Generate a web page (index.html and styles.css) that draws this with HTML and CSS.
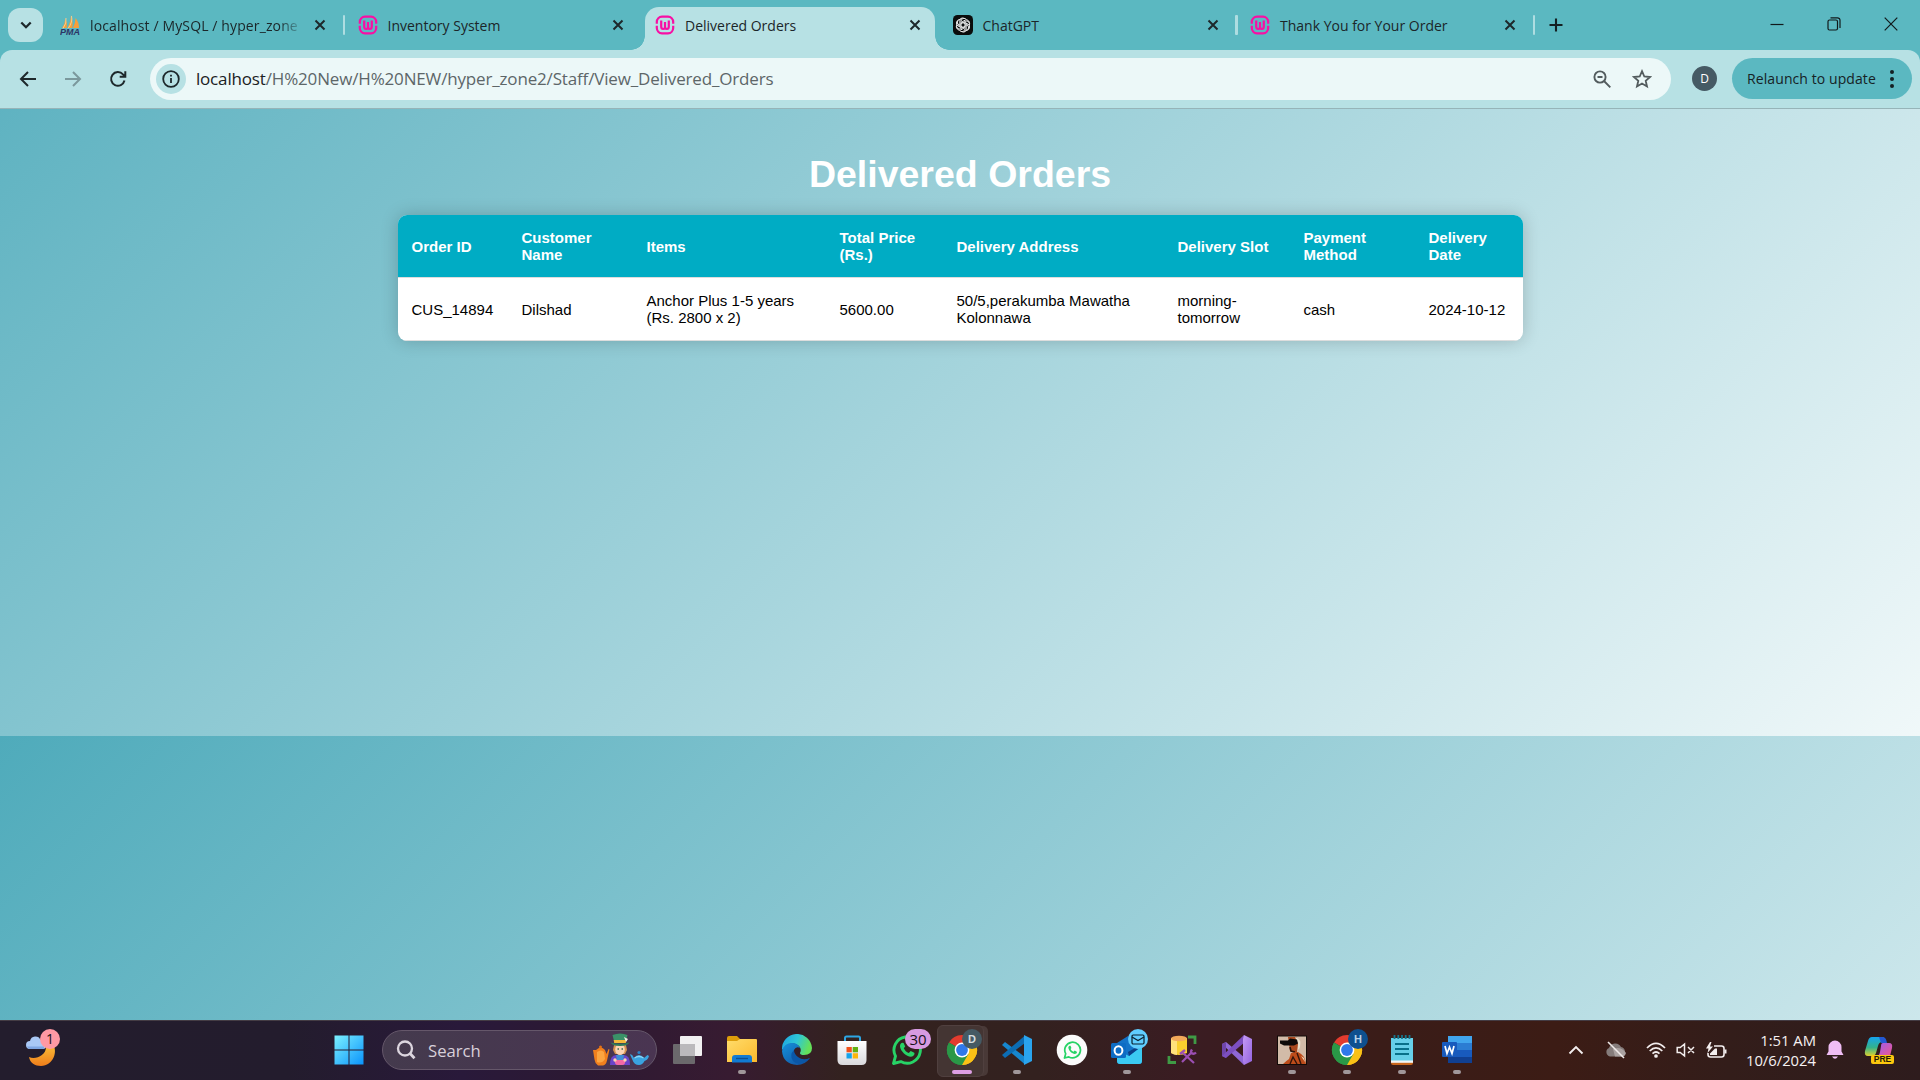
FILE: index.html
```html
<!DOCTYPE html>
<html lang="en">
<head>
<meta charset="utf-8">
<title>Delivered Orders</title>
<link rel="stylesheet" href="styles.css">
</head>
<body>
<svg class="defs" width="0" height="0" aria-hidden="true">
  <defs>
    <symbol id="wamp" viewBox="0 0 20 20">
      <g fill="none" stroke="#f80fa4" stroke-width="2.200">
        <path d="M1.800 8.700V7a5.500 5.500 0 0 1 5.200-5.400h6A5.500 5.500 0 0 1 18.200 7v1.700M1.800 10.800V13A5.500 5.500 0 0 0 7 18.400h6a5.500 5.500 0 0 0 5.200-5.400v-2.200"/>
        <path d="M6.200 5.500v6q0 2.500 1.900 2.500t1.900-2.500V7v4.500q0 2.500 1.900 2.500t1.900-2.500v-6"/>
      </g>
    </symbol>
    <symbol id="close" viewBox="0 0 12 12"><path d="M1.500 1.500l9 9M10.500 1.500l-9 9" stroke="#1d282b" stroke-width="2" fill="none"/></symbol>
    <symbol id="chrome" viewBox="0 0 32 32">
      <path d="M16 16 3.010 8.500A15 15 0 0 1 29 8.500z" fill="#e33b2e"/>
      <path d="M16 16 29 8.500A15 15 0 0 1 16 31z" fill="#fbc116"/>
      <path d="M16 16V31A15 15 0 0 1 3 8.500z" fill="#2a9847"/>
      <path d="M16 8.500H29A15 15 0 0 1 16 31l6.500-11.300z" fill="#fbc116"/>
      <path d="M9.500 19.700 3 8.500A15 15 0 0 0 16 31l6.500-11.300z" fill="#2a9847"/>
      <circle cx="16" cy="16" r="7.400" fill="#fff"/><circle cx="16" cy="16" r="5.900" fill="#3079ea"/>
    </symbol>
    <symbol id="whatsapp" viewBox="0 0 32 32">
      <path d="M2.500 29.500l2-7.300A13.200 13.200 0 1 1 9.800 27.600z" fill="none" stroke="#27d366" stroke-width="2.900" stroke-linejoin="round"/>
      <path d="M11.300 8.700c-1 0-2.500 1.600-2.300 3.700.5 4.800 6.500 10.300 10.800 10.300 2 0 3.700-1.600 3.700-3l-.2-.9-3.600-1.800-1.900 2c-2.300-.8-4-2.500-5-4.700l1.400-1.800-1.600-3.500z" fill="#27d366"/>
    </symbol>
    <linearGradient id="gWin" x1="0" y1="0" x2="1" y2="1"><stop offset="0" stop-color="#7cf1ff"/><stop offset="1" stop-color="#0a93fb"/></linearGradient>
    <linearGradient id="gMoon" x1="0" y1="0" x2="0" y2="1"><stop offset="0" stop-color="#fcc43a"/><stop offset="1" stop-color="#ee7d1b"/></linearGradient>
    <linearGradient id="gFolder" x1="0" y1="0" x2="1" y2="1"><stop offset="0" stop-color="#ffdc6b"/><stop offset="1" stop-color="#fbb92c"/></linearGradient>
    <linearGradient id="gEdge" x1="0" y1="0" x2="1" y2=".3"><stop offset="0" stop-color="#1ba2e4"/><stop offset=".55" stop-color="#2fc7d6"/><stop offset="1" stop-color="#64e05a"/></linearGradient>
    <linearGradient id="gEdge2" x1="0" y1="0" x2="1" y2="1"><stop offset="0" stop-color="#1592dc"/><stop offset="1" stop-color="#114a9b"/></linearGradient>
    <linearGradient id="gStore" x1="0" y1="0" x2="0" y2="1"><stop offset="0" stop-color="#fff"/><stop offset="1" stop-color="#d9d9dc"/></linearGradient>
    <linearGradient id="gVs" x1="0" y1="0" x2="1" y2="1"><stop offset="0" stop-color="#c59cf5"/><stop offset="1" stop-color="#9463e0"/></linearGradient>
    <linearGradient id="gCopA" x1="0" y1="0" x2="0" y2="1"><stop offset="0" stop-color="#16a5ef"/><stop offset=".55" stop-color="#33b38c"/><stop offset="1" stop-color="#ded02f"/></linearGradient>
    <linearGradient id="gCopB" x1="0" y1="0" x2="1" y2="1"><stop offset="0" stop-color="#9a5df0"/><stop offset="1" stop-color="#f0588d"/></linearGradient>
  </defs>
</svg>

<div class="screen">
  <header class="tabstrip">
    <button class="tab-search"><svg width="12" height="8" viewBox="0 0 12 8"><path d="M1.300 1.500 6 6.200l4.700-4.700" fill="none" stroke="#1d282b" stroke-width="2.300"/></svg></button>
    <nav class="tabs">
      <div class="tab sep">
        <svg class="favicon" viewBox="0 0 20 20"><path d="M2 13Q5 9 5.500 3q2 5 1.200 10zM7.500 13Q10.500 8 11 0q2.500 7 1.200 13zM13 13q2.500-5 2.500-10 3.500 4 3.500 10z" fill="#f79f38"/><path d="M3 13.500Q7 8 6 3M8 13.500Q13 7 11.500 1" stroke="#fbd9a1" fill="none" stroke-width=".8"/><text x="0" y="19.500" class="pma" textLength="20">PMA</text></svg>
        <span class="title t-pma">localhost / MySQL / hyper_zone</span><svg class="x"><use href="#close"/></svg>
      </div>
      <div class="tab"><svg class="favicon"><use href="#wamp"/></svg><span class="title">Inventory System</span><svg class="x"><use href="#close"/></svg></div>
      <div class="tab active"><svg class="favicon"><use href="#wamp"/></svg><span class="title">Delivered Orders</span><svg class="x"><use href="#close"/></svg></div>
      <div class="tab sep">
        <svg class="favicon" viewBox="0 0 20 20"><rect width="20" height="20" rx="4.500" fill="#0a0c0c"/><g fill="none" stroke="#e8e8e8" stroke-width="1"><path id="petal" d="M8 12.200V6.300a3 3 0 0 1 5.500-1.600M8 7.500l4.200-2.400a2.800 2.800 0 0 1 4 3"/><use href="#petal" transform="rotate(60 10 10)"/><use href="#petal" transform="rotate(120 10 10)"/><use href="#petal" transform="rotate(180 10 10)"/><use href="#petal" transform="rotate(240 10 10)"/><use href="#petal" transform="rotate(300 10 10)"/></g></svg>
        <span class="title">ChatGPT</span><svg class="x"><use href="#close"/></svg>
      </div>
      <div class="tab sep"><svg class="favicon"><use href="#wamp"/></svg><span class="title">Thank You for Your Order</span><svg class="x"><use href="#close"/></svg></div>
    </nav>
    <svg class="newtab" width="14" height="14" viewBox="0 0 14 14"><path d="M7 .5v13M.5 7h13" stroke="#142023" stroke-width="2.100"/></svg>
    <div class="winctl">
      <svg width="14" height="14" viewBox="0 0 14 14"><path d="M.5 7.500h13" stroke="#11191b" stroke-width="1.200"/></svg>
      <svg width="14" height="14" viewBox="0 0 14 14" fill="none" stroke="#11191b" stroke-width="1.200"><rect x="1" y="3" width="9.500" height="10" rx="1.500"/><path d="M3.500.8h7a2.500 2.500 0 0 1 2.500 2.500V11"/></svg>
      <svg width="14" height="14" viewBox="0 0 14 14"><path d="M.7.7l12.600 12.600M13.300.7.7 13.300" stroke="#11191b" stroke-width="1.200"/></svg>
    </div>
  </header>

  <div class="toolbar">
    <div class="navs">
      <svg width="18" height="18" viewBox="0 0 18 18" fill="none" stroke="#1d282b" stroke-width="2"><path d="M17 9H2.500M9 2 2 9l7 7"/></svg>
      <svg width="18" height="18" viewBox="0 0 18 18" fill="none" stroke="#7b989c" stroke-width="2"><path d="M1 9h14.500M9 2l7 7-7 7"/></svg>
      <svg width="18" height="18" viewBox="0 0 18 18" fill="none" stroke="#1d282b" stroke-width="2"><path d="M15.500 10.500A6.800 6.800 0 1 1 14 4.400l2 2.100M16.300 1.200v5.600h-5.600"/></svg>
    </div>
    <div class="omnibox">
      <span class="info"><svg width="18" height="18" viewBox="0 0 18 18" fill="none" stroke="#1d282b" stroke-width="1.800"><circle cx="9" cy="9" r="7.800"/><path d="M9 8v5M9 4.800v1.800"/></svg></span>
      <span class="url"><b>localhost</b>/H%20New/H%20NEW/hyper_zone2/Staff/View_Delivered_Orders</span>
      <svg class="mag" width="18" height="18" viewBox="0 0 18 18" fill="none" stroke="#535c5e" stroke-width="1.900"><circle cx="7" cy="7" r="5.600"/><path d="M11 11l6.300 6.300M4.500 7h5"/></svg>
      <svg class="star" width="20" height="20" viewBox="0 0 20 20"><path d="M10 2.200l2.300 5.300 5.700.5-4.300 3.800 1.300 5.700-5-3-5 3 1.300-5.700L2 8l5.700-.5z" fill="none" stroke="#535c5e" stroke-width="1.800"/></svg>
    </div>
    <span class="avatar">D</span>
    <button class="relaunch"><span>Relaunch to update</span><svg width="4" height="18" viewBox="0 0 4 18" fill="#142023"><circle cx="2" cy="2" r="2"/><circle cx="2" cy="9" r="2"/><circle cx="2" cy="16" r="2"/></svg></button>
  </div>

  <main class="page">
    <h1>Delivered Orders</h1>
    <table class="orders">
      <colgroup><col class="c1"><col class="c2"><col class="c3"><col class="c4"><col class="c5"><col class="c6"><col class="c7"><col class="c8"></colgroup>
      <thead><tr><th>Order ID</th><th>Customer<br>Name</th><th>Items</th><th>Total Price<br>(Rs.)</th><th>Delivery Address</th><th>Delivery Slot</th><th>Payment<br>Method</th><th>Delivery<br>Date</th></tr></thead>
      <tbody><tr><td>CUS_14894</td><td>Dilshad</td><td>Anchor Plus 1-5 years<br>(Rs. 2800 x 2)</td><td>5600.00</td><td>50/5,perakumba Mawatha<br>Kolonnawa</td><td>morning-<br>tomorrow</td><td>cash</td><td>2024-10-12</td></tr></tbody>
    </table>
  </main>

  <footer class="taskbar">
    <div class="weather">
      <svg width="34" height="36" viewBox="0 0 34 36"><path d="M3 25c6 3 17-1 17-10l6-4c7 8 1 23-11 23C9 34 4 31 3 25z" fill="url(#gMoon)"/><path d="M4 17a4 4 0 0 1 0-8 5.500 5.500 0 0 1 10.500-1A5 5 0 0 1 18 17z" fill="#a9c8f5"/><path d="M1 14.500h17V17H4q-2.500 0-3-2.500z" fill="#7fa6e3"/></svg>
      <span class="badge b-news">1</span>
    </div>
    <div class="apps">
      <div class="app"><svg viewBox="0 0 32 32"><path d="M1.500 1.500h14v14h-14zM16.500 1.500h14v14h-14zM1.500 16.500h14v14h-14zM16.500 16.500h14v14h-14z" fill="url(#gWin)"/></svg></div>
      <div class="search">
        <svg width="20" height="20" viewBox="0 0 20 20" fill="none" stroke="#dcd6df" stroke-width="2.300"><circle cx="9" cy="8.500" r="7"/><path d="M14 13.500l4.500 4.700" stroke-width="2.800"/></svg>
        <span>Search</span>
        <svg class="hatter" width="58" height="34" viewBox="0 0 58 34">
          <path d="M4 17q5-5 9 0l1.500 4 2-5 1 .5-2.500 11q-1 4.500-4 5H6q-3-2-3.500-6L1 17z" fill="#f0801d"/><path d="M5 19q4-3 7 0l1 7q-3 5-8 3z" fill="#fba540"/><circle cx="8.500" cy="14" r="1.500" fill="#e27114"/>
          <path d="M18 32q0-10 6-10h8q6 0 6 10z" fill="#6a45c9"/><path d="M24 22h8l-1 6h-6z" fill="#3f8fd6"/>
          <path d="M22 12h12l1 5-2 4h-10l-2-4z" fill="#d69450"/><ellipse cx="28" cy="16.500" rx="4.800" ry="5.500" fill="#fcd4b4"/><path d="M25.500 16h1.500M29.500 16H31" stroke="#366b57" stroke-width="1.400"/>
          <path d="M20.500 2q7.500-3 15 0l-2 8H22.500z" fill="#3a9268"/><path d="M21.700 7h12.600l-.5 3H22.200z" fill="#f2b83a"/><path d="M18.500 9.500q9.500 2.500 19 0-2 3.500-9.500 3.500t-9.500-3.500z" fill="#2d7b59"/><path d="M32 4l4 2-2 3z" fill="#f4efe1"/>
          <path d="M23 27h10q1 5-3 5h-4q-4 0-3-5z" fill="#f26aa5"/><circle cx="23" cy="27" r="1.700" fill="#fcd4b4"/><circle cx="33" cy="27" r="1.700" fill="#fcd4b4"/>
          <path d="M38 21.500q2-1 4 3.500 5-6 10 0l3.500-3 1.500 1q-1 4-4.500 5-2 4-5.500 4-5 0-6.500-5z" fill="#3aa3df"/><circle cx="47" cy="19.500" r="1.600" fill="#2a83c5"/><path d="M42.500 25q4.500-3 9 0" stroke="#8bd8f7" fill="none" stroke-width="1.300"/>
        </svg>
      </div>
      <div class="app"><svg viewBox="0 0 32 32"><rect x="9" y="2" width="22" height="20" rx="1" fill="#f1f0f1"/><rect x="2" y="10" width="22" height="20" rx="1" fill="#6b696c"/><rect x="9" y="10" width="15" height="12" fill="#bbb9bc"/></svg></div>
      <div class="app run"><svg viewBox="0 0 32 32"><path d="M1 4q0-2 2-2h8l3 3v5H1z" fill="#dd9d0a"/><path d="M1 7h10l3-2h16q1 0 1 1v22H1z" fill="url(#gFolder)"/><path d="M6 28.500V24q0-3 3-3h14q3 0 3 3v4.500z" fill="#117bd3"/><path d="M10 24.500h12" stroke="#0a4f94" stroke-width="1.400"/></svg></div>
      <div class="app"><svg viewBox="0 0 32 32"><path d="M1 16A15 15 0 0 1 31 14q0 7-8 7-4 0-4-2 2-4-1-7-8-7-17 4z" fill="url(#gEdge)"/><path d="M1 17Q3 9 11 9q6 0 8 5-4-2-6 2-1 6 6 10 5 1 10-2-5 7-13 7Q2 30 1 17z" fill="url(#gEdge2)"/><path d="M13 16q-5 5-1 11 5 5 12 1l5-4q-7 3-12-1-4-3-4-7z" fill="#0b57a7"/></svg></div>
      <div class="app"><svg viewBox="0 0 32 32"><path d="M9 7V4q0-1.500 1.500-1.500h12Q24 2.500 24 4v3" fill="none" stroke="#2da6e3" stroke-width="2"/><path d="M1.500 7h29v19q0 5-5 5h-19q-5 0-5-5z" fill="url(#gStore)"/><path d="M10.500 13h5.300v5.300h-5.300z" fill="#f1511b"/><path d="M16.700 13H22v5.300h-5.300z" fill="#61b010"/><path d="M10.500 19.200h5.300v5.300h-5.300z" fill="#15a3ea"/><path d="M16.700 19.200H22v5.300h-5.300z" fill="#fbb60b"/></svg></div>
      <div class="app"><svg><use href="#whatsapp"/></svg><span class="badge b-wa">30</span></div>
      <div class="app focus"><svg><use href="#chrome"/></svg><span class="badge b-d">D</span></div>
      <div class="app run"><svg viewBox="0 0 32 32"><path d="M1 11l3-3 20 15v7.500z" fill="#1687cf"/><path d="M1 21l3 3L24 9V1.500z" fill="#0c6db4"/><path d="M23 1 31 5v22l-8 4z" fill="#2aa4ee"/></svg></div>
      <div class="app"><svg viewBox="0 0 32 32"><circle cx="16" cy="16" r="15.300" fill="#fbfbfb"/><svg x="7" y="6.500" width="19" height="19"><use href="#whatsapp"/></svg></svg></div>
      <div class="app run"><svg viewBox="0 0 32 32"><path d="M6 9 17 2l14 9v16q0 3-3 3H9q-3 0-3-3z" fill="#1373c8"/><path d="M6 16l12 6 13-10v15q0 3-3 3H9q-3 0-3-3z" fill="#3bcaf2"/><path d="M18 22 31 12v-2L17 18z" fill="#0b3f86"/><rect y="9" width="15" height="15" rx="1.500" fill="#0d6cc4"/><ellipse cx="7.500" cy="16.500" rx="3.900" ry="4.200" fill="none" stroke="#fff" stroke-width="2"/></svg>
        <span class="badge b-mail"><svg viewBox="0 0 14 11" fill="none" stroke="#0b2130" stroke-width="1.200"><rect x="1" y="1" width="12" height="9" rx="1.200"/><path d="M1 3l6 3.500L13 3"/></svg></span></div>
      <div class="app"><svg viewBox="0 0 32 32"><path d="M5 4v15q8 4 16 0V4z" fill="#f9cf2e"/><path d="M5 4v15q3 2 6 2V4z" fill="#ffe27c"/><ellipse cx="13" cy="4.500" rx="8" ry="2.800" fill="#f2a95a"/><path d="M22 3h7v7M3 22v6.500h7" fill="none" stroke="#3f9a45" stroke-width="2.800"/><path d="M16 28l10-10M17 19l11 10" stroke="#9b4fb3" stroke-width="2.200" fill="none"/><path d="M14 20l5-4M26 15.500q-2 3 0 4t4-1" stroke="#9b4fb3" stroke-width="2.400" fill="none"/></svg></div>
      <div class="app"><svg viewBox="0 0 32 32"><path d="M1 10l4-2 19 16-1 7z" fill="#8f67d6"/><path d="M1 10v12l4 2V8z" fill="#6e45ab"/><path d="M1 22l4 2L24 8l-1-7z" fill="#7c4fc0"/><path d="M23 1l8 4v22l-8 4-1-4V5z" fill="url(#gVs)"/></svg></div>
      <div class="app run"><svg viewBox="0 0 32 32"><rect x="1" y="1.500" width="30" height="29.500" fill="#120b08"/><path d="M2 2.500h28V30H2z" fill="#d2bba8"/><path d="M12 3h8l3 5v7l-3 5-6-3z" fill="#a9481d"/><path d="M19 3q7 2 5 10l-3 6 1-9z" fill="#e9dfcb"/><path d="M4 6.500h8l2-2 7 1 1 4-4 2H8l-4-2z" fill="#0d0908"/><path d="M14 13l1 4 4 1" stroke="#2a120a" stroke-width="1.600" fill="none"/><path d="M7 30q3-3 6-5l2-6 7-1q7 3 8 12z" fill="#bd4c1a"/><path d="M14 30l3-7 4 7M21 19l4 11" stroke="#33140a" stroke-width="1.400" fill="none"/><path d="M25 22l3 2 1 4z" fill="#edd9bd"/></svg></div>
      <div class="app run"><svg><use href="#chrome"/></svg><span class="badge b-h">H</span></div>
      <div class="app run"><svg viewBox="0 0 32 32"><path d="M5 26h22v3q0 2-2 2H7q-2 0-2-2z" fill="#c9661c"/><path d="M5 4h22v24H5z" fill="#66cfe8"/><path d="M5 26.500h22v2.300H5z" fill="#f3f5f6"/><path d="M8.500 1v4M12.300 1v4M16 1v4M19.700 1v4M23.500 1v4" stroke="#15758b" stroke-width="1.800"/><path d="M9 10h14M9 15h14M9 20h14" stroke="#087089" stroke-width="2"/></svg></div>
      <div class="app run"><svg viewBox="0 0 32 32"><path d="M7 2h24v7H7z" fill="#41a5ee"/><path d="M7 9h24v7H7z" fill="#2b7cd3"/><path d="M7 16h24v7H7z" fill="#185abd"/><path d="M7 23h24v6H7z" fill="#103f91"/><rect x="1" y="8" width="15" height="15" rx="1" fill="#185abd"/><path d="M4 12l2 7.500L8.500 13l2.500 6.500 2-7.500" fill="none" stroke="#fff" stroke-width="1.700"/></svg></div>
    </div>
    <div class="tray">
      <svg class="chev" width="16" height="10" viewBox="0 0 16 10"><path d="M1.500 8.500 8 2l6.500 6.500" fill="none" stroke="#f3eeee" stroke-width="1.900"/></svg>
      <svg class="cloud" width="22" height="18" viewBox="0 0 22 18"><path d="M5 15.500A4.500 4.500 0 0 1 4 7a6.500 6.500 0 0 1 12-1 5 5 0 0 1 1 9.500z" fill="#857c7b"/><path d="M10 15.500 8 8q8-3 13 4-1 3.500-4 3.500z" fill="#aaa2a1"/><path d="M3 1l16 16" stroke="#f0ebea" stroke-width="1.600"/></svg>
      <svg class="wifi" width="20" height="16" viewBox="0 0 20 16" fill="none" stroke="#f3eeee" stroke-width="1.700"><path d="M1 6q9-9 18 0M3.700 9q6.300-6.300 12.600 0M6.500 11.700q3.500-3.400 7 0"/><circle cx="10" cy="14" r="1" fill="#f3eeee"/></svg>
      <svg class="mute" width="20" height="16" viewBox="0 0 20 16" fill="none" stroke="#f3eeee" stroke-width="1.500"><path d="M1.200 5.500v5h3L8.500 14V2L4.200 5.500zM12 5l6 6M18 5l-6 6"/></svg>
      <svg class="batt" width="21" height="17" viewBox="0 0 21 17"><path d="M8 4h7.500Q18 4 18 6.500v6q0 2.500-2.500 2.500h-11Q2 15 2 12.500V11" fill="none" stroke="#f3eeee" stroke-width="1.600"/><path d="M18.500 7.500h2v4h-2zM4 11.500 9 6.500h2V13H4z" fill="#f3eeee"/><path d="M4 0 0 6.500h2.500L1.500 11 7 4.500H4L5.500 0z" fill="#f3eeee"/></svg>
      <div class="clock"><span>1:51 AM</span><span>10/6/2024</span></div>
      <svg class="bell" width="18" height="20" viewBox="0 0 18 20"><path d="M9 .5A6.500 6.500 0 0 1 15.500 7v4.500l2 3.500H.5l2-3.500V7A6.500 6.500 0 0 1 9 .5zM6 16.500h6q-3 4.500-6 0z" fill="#efbdf4"/></svg>
      <div class="copilot"><svg width="30" height="28" viewBox="0 0 30 28"><path d="M8 1h10q3 0 4 5h-4q-3 0-4 4l-2 7q-1 3-4 3H4q-4 0-3-5L4 5q1-4 4-4z" fill="url(#gCopA)"/><path d="M15 1h4q3 0 4 6h-6z" fill="#2358d4"/><path d="M19 7h6q4 0 3 5l-2 8H13q2 0 3-4l1-6q0-3 2-3z" fill="url(#gCopB)"/></svg><b>PRE</b></div>
    </div>
  </footer>
</div>
</body>
</html>
```
FILE: styles.css
```css
* { box-sizing: border-box; }
body { margin: 0; overflow: hidden; font-family: "Open Sans", "Noto Sans", sans-serif; }
svg { display: block; flex: none; }
.defs { position: absolute; }
button { border: 0; padding: 0; font: inherit; color: inherit; }
.screen { width: 1920px; height: 1080px; display: flex; flex-direction: column; background: #5bb8c1; }

/* browser tabs */
.tabstrip { height: 50px; display: flex; align-items: flex-start; color: #1b2629; }
.tab-search { width: 35px; height: 34px; margin: 8px 7px 0 8px; border-radius: 12px; background: #b7e1e4; display: flex; align-items: center; justify-content: center; }
.tabs { display: flex; gap: 7.5px; padding-top: 7px; }
.tab { position: relative; width: 290px; height: 43px; padding: 0 14px 7px 10px; display: flex; align-items: center; border-radius: 14px 14px 0 0; font-size: 14px; }
.favicon { width: 20px; height: 20px; }
.pma { font: italic bold 9px "Liberation Sans", sans-serif; fill: #2c3566; }
.title { width: 212px; margin: 0 12px 0 10px; white-space: nowrap; }
.t-pma { letter-spacing: .12px; -webkit-mask-image: linear-gradient(90deg, #000 89%, transparent 101%); mask-image: linear-gradient(90deg, #000 89%, transparent 101%); }
.x { width: 12px; height: 12px; }
.sep::after { content: ""; position: absolute; right: -5px; top: 8px; width: 2.500px; height: 20px; border-radius: 1px; background: #aedde1; }
.active { background: #b7e1e4; }
.active::before, .active::after { content: ""; position: absolute; bottom: 0; width: 14px; height: 14px; }
.active::before { left: -14px; background: radial-gradient(circle at 0 0, transparent 13.500px, #b7e1e4 14px); }
.active::after { right: -14px; background: radial-gradient(circle at 100% 0, transparent 13.500px, #b7e1e4 14px); }
.newtab { margin: 18px 0 0 19px; }
.winctl { display: flex; gap: 43px; margin: 17px 22px 0 auto; }

/* address bar */
.toolbar { height: 59px; padding: 0 8px 1px 19px; border-bottom: 1.500px solid #96b4b8; border-radius: 12px 12px 0 0; background: #b7e1e4; display: flex; align-items: center; }
.navs { display: flex; gap: 27px; width: 131px; }
.omnibox { width: 1522px; height: 42px; padding: 0 19px 0 6px; border-radius: 21px; background: #ecf8f8; display: flex; align-items: center; }
.info { width: 30px; height: 30px; border-radius: 50%; background: #b7e1e4; display: grid; place-items: center; }
.url { margin: 0 auto 0 10px; font-size: 17px; letter-spacing: -.16px; color: #5d6668; white-space: nowrap; }
.url b { font-weight: 400; color: #1b2123; }
.mag { margin-right: 21px; }
.avatar { width: 25px; height: 25px; margin: 0 15px 0 21px; border-radius: 50%; background: #455a64; color: #fff; font-size: 12px; display: grid; place-items: center; }
.relaunch { width: 180px; height: 41px; padding: 0 18px 0 15px; border-radius: 21px; background: #5bb8c1; color: #162225; font-size: 14px; letter-spacing: .08px; white-space: nowrap; display: flex; align-items: center; justify-content: space-between; }

/* orders page */
.page { flex: 1; padding-top: 42px; background: linear-gradient(135deg, #4fabbb, #f0f8f9) 0 627px / 100% 911px; font-family: "Liberation Sans", Arial, sans-serif; }
h1 { margin: 0 0 18px; font-size: 37.500px; line-height: 46px; color: #fff; text-align: center; }
.orders { width: 1125px; margin: 0 auto; table-layout: fixed; border-collapse: separate; border-spacing: 0; background: #fff; border-radius: 9px; overflow: hidden; box-shadow: 0 0 18px rgba(0, 0, 0, .2); font-size: 15px; line-height: 17px; text-align: left; color: #000; position: relative; left: .5px; }
.orders th, .orders td { height: 63px; padding: 0 0 0 13.500px; border-bottom: 1px solid #ddd; white-space: nowrap; }
.orders th { background: #00acc4; color: #fff; }
.c1 { width: 110px; } .c2 { width: 125px; } .c3 { width: 193px; } .c4 { width: 117px; }
.c5 { width: 221px; } .c6 { width: 126px; } .c7 { width: 125px; } .c8 { width: 108px; }

/* taskbar */
.taskbar { height: 60px; padding-bottom: 1px; display: flex; align-items: center; border-top: 1px solid #443c44; background: linear-gradient(90deg, #231d2d 0, #231c2d 15%, #29193a 24%, #2c1933 30%, #371b31 38%, #33221f 44%, #33211f 54%, #3a1c22 62%, #3a1c18 72%, #3c1c15 81%, #331d1a 90%, #2e1c1d 100%); color: #f6f1f2; }
.weather { position: relative; width: 295.500px; margin-left: 26px; }
.badge { position: absolute; z-index: 2; display: grid; place-items: center; border-radius: 10px; height: 20px; color: #171117; font-size: 14px; line-height: 1; }
.b-news { left: 14px; top: -3px; width: 20px; background: #ff99a4; }
.apps { display: flex; align-items: center; }
.app { position: relative; width: 55px; height: 58px; display: grid; place-items: center; }
.app > svg { width: 32px; height: 32px; z-index: 1; }
.run::after, .focus::after { content: ""; position: absolute; left: 23.500px; bottom: 5px; width: 8px; height: 4px; border-radius: 2px; background: #a0979a; }
.focus::after { left: 17.500px; width: 20px; background: #dd9fe4; }
.focus::before { content: ""; position: absolute; left: 2.500px; top: 4px; width: 45px; height: 50px; border: 1px solid #50403f; border-radius: 6px; background: #443533; box-shadow: 5px 0 0 -1px #493937; }
.b-wa { left: 26px; top: 8px; width: 26px; background: #d89be2; font-size: 15px; }
.b-d, .b-h, .b-mail { left: 28px; top: 8px; width: 20px; background: #455a64; color: #d5dde0; font: bold 11px "Liberation Sans", sans-serif; }
.b-h { left: 29px; background: #0e508f; color: #b8d2e8; }
.b-mail { left: 29px; background: #60cdff; }
.b-mail svg { width: 14px; height: 11px; }
.search { width: 275px; height: 40px; margin: 0 2px 0 5.500px; padding: 0 6px 0 13px; border: 1px solid #65576a; border-radius: 20px; background: linear-gradient(90deg, #443a4d, #4a3552); display: flex; align-items: center; gap: 12px; font-size: 16.700px; color: #d8d0da; }
.hatter { margin-left: auto; }
.tray { display: flex; align-items: center; margin-left: 84px; }
.cloud { margin-left: 21px; }
.wifi { margin-left: 19px; }
.mute { margin-left: 10px; }
.batt { margin-left: 10px; }
.clock { width: 89px; display: flex; flex-direction: column; align-items: flex-end; font-size: 14.800px; line-height: 20px; white-space: nowrap; }
.bell { margin-left: 10px; }
.copilot { position: relative; margin-left: 20px; }
.copilot b { position: absolute; left: 7px; top: 19px; width: 23px; height: 9px; border-radius: 2px; background: #fcc70e; color: #211a06; font: bold 8.500px/9px "Liberation Sans", sans-serif; text-align: center; }
```
